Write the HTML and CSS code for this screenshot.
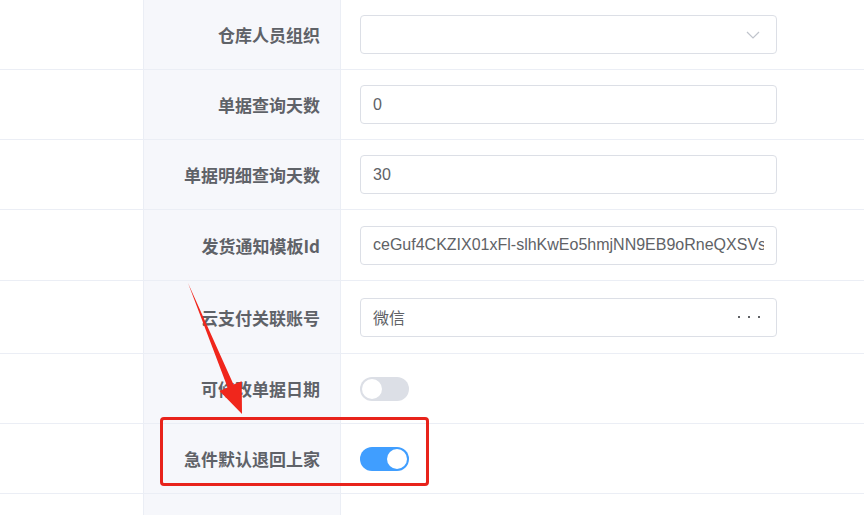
FILE: index.html
```html
<!DOCTYPE html>
<html lang="zh-CN">
<head>
<meta charset="utf-8">
<title>设置</title>
<link rel="stylesheet" href="styles.css">
</head>
<body>
<div class="page">
  <div class="form">
    <div class="row">
      <div class="spacer"></div>
      <div class="label">仓库人员组织</div>
      <div class="field">
        <div class="input select">
          <span class="value"></span>
          <svg class="chevron" width="14" height="8" viewBox="0 0 14 8"><path d="M1 1 L7 7 L13 1" fill="none" stroke="#c0c4cc" stroke-width="1.2"/></svg>
        </div>
      </div>
    </div>
    <div class="row">
      <div class="spacer"></div>
      <div class="label">单据查询天数</div>
      <div class="field"><div class="input"><span class="value">0</span></div></div>
    </div>
    <div class="row">
      <div class="spacer"></div>
      <div class="label">单据明细查询天数</div>
      <div class="field"><div class="input"><span class="value">30</span></div></div>
    </div>
    <div class="row row-71">
      <div class="spacer"></div>
      <div class="label">发货通知模板Id</div>
      <div class="field"><div class="input"><span class="value clip">ceGuf4CKZIX01xFl-slhKwEo5hmjNN9EB9oRneQXSVs</span></div></div>
    </div>
    <div class="row row-73">
      <div class="spacer"></div>
      <div class="label">云支付关联账号</div>
      <div class="field">
        <div class="input">
          <span class="value">微信</span>
          <span class="dots"><i></i><i></i><i></i></span>
        </div>
      </div>
    </div>
    <div class="row">
      <div class="spacer"></div>
      <div class="label">可修改单据日期</div>
      <div class="field"><span class="switch"><span class="knob"></span></span></div>
    </div>
    <div class="row">
      <div class="spacer"></div>
      <div class="label">急件默认退回上家</div>
      <div class="field"><span class="switch on"><span class="knob"></span></span></div>
    </div>
    <div class="row row-last">
      <div class="spacer"></div>
      <div class="label"></div>
      <div class="field"></div>
    </div>
  </div>

  <div class="highlight"></div>
  <svg class="arrow" width="864" height="515" viewBox="0 0 864 515">
    <polygon points="188,283 233.5,384.5 241.7,381.2 242,414 219.5,390.9 227.6,387.4" fill="#f0261c"/>
  </svg>
</div>
</body>
</html>
```

FILE: styles.css
```css
html, body {
  margin: 0;
  padding: 0;
  background: #ffffff;
}

.page {
  position: relative;
  width: 864px;
  height: 515px;
  overflow: hidden;
  font-family: "Liberation Sans", "Noto Sans CJK SC", sans-serif;
}

.form {
  display: flex;
  flex-direction: column;
}

.row {
  display: flex;
  height: 70px;
  border-bottom: 1px solid #ebeef5;
  box-sizing: border-box;
}

.row-71 { height: 71px; }
.row-73 { height: 73px; }
.row-last { height: 40px; border-bottom: none; }

.spacer {
  width: 143px;
  flex: none;
}

.label {
  width: 198px;
  flex: none;
  box-sizing: border-box;
  background: #f6f7fb;
  border-left: 1px solid #ebeef5;
  border-right: 1px solid #ebeef5;
  display: flex;
  align-items: center;
  justify-content: flex-end;
  padding-right: 20px;
  font-family: "Noto Sans CJK SC", sans-serif;
  font-weight: 700;
  font-size: 17px;
  color: #5f6268;
  white-space: nowrap;
}

.field {
  flex: 1;
  display: flex;
  align-items: center;
  padding-left: 19px;
}

.input {
  width: 417px;
  height: 39px;
  box-sizing: border-box;
  border: 1px solid #dcdfe6;
  border-radius: 4px;
  display: flex;
  align-items: center;
  padding: 0 12px;
  font-size: 16px;
  color: #606266;
  background: #fff;
}

.value {
  flex: 1;
  white-space: nowrap;
  overflow: hidden;
}

.select .chevron {
  margin-right: 4px;
}

.dots {
  display: flex;
  gap: 8px;
  margin-right: 4px;
}

.dots i {
  display: block;
  width: 2px;
  height: 2px;
  background: #606266;
}

.switch {
  position: relative;
  display: inline-block;
  width: 49px;
  height: 24px;
  border-radius: 12px;
  background: #dcdfe6;
}

.switch .knob {
  position: absolute;
  top: 2px;
  left: 2px;
  width: 20px;
  height: 20px;
  border-radius: 50%;
  background: #fff;
}

.switch.on {
  background: #409eff;
}

.switch.on .knob {
  left: 27px;
}

.highlight {
  position: absolute;
  left: 160px;
  top: 417px;
  width: 269px;
  height: 69px;
  box-sizing: border-box;
  border: 3px solid #e8231b;
  border-radius: 4px;
}

.arrow {
  position: absolute;
  left: 0;
  top: 0;
  pointer-events: none;
}
```
